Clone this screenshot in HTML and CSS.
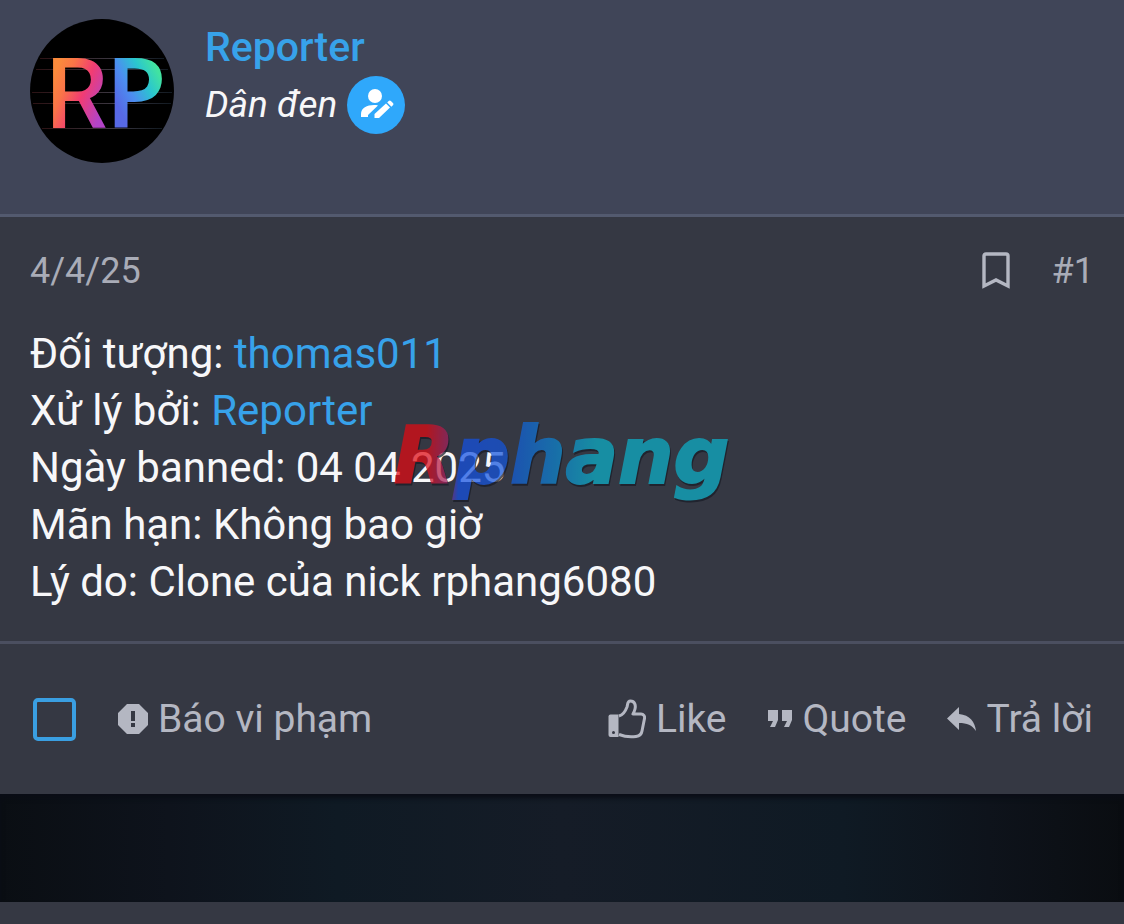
FILE: index.html
```
<!DOCTYPE html>
<html lang="vi">

<head>
    <meta charset="utf-8">
    <meta name="viewport" content="width=device-width, initial-scale=1.0">
    <title>Reporter</title>

    <link rel="stylesheet" href="styles.css">
</head>

<body>

    <main>
        <article class="post">
            <header class="user">
                <svg class="avatar" viewBox="0 0 144 144" role="img" aria-label="RP">
                    <defs>
                        <linearGradient id="r-fill" gradientUnits="userSpaceOnUse" x1="22" y1="60" x2="76" y2="82">
                            <stop offset="0" stop-color="#fb8b3c" />
                            <stop offset=".25" stop-color="#fa7448" />
                            <stop offset=".58" stop-color="#f23c72" />
                            <stop offset="1" stop-color="#b344c8" />
                        </linearGradient>
                        <linearGradient id="p-fill" gradientUnits="userSpaceOnUse" x1="84" y1="80" x2="130" y2="56">
                            <stop offset="0" stop-color="#5769e6" />
                            <stop offset=".35" stop-color="#4c8ef0" />
                            <stop offset=".7" stop-color="#2ac6cf" />
                            <stop offset="1" stop-color="#42e3a0" />
                        </linearGradient>
                        <linearGradient id="streak">
                            <stop offset="0" stop-color="#2c1214" />
                            <stop offset=".6" stop-color="#3c3842" />
                            <stop offset="1" stop-color="#121a22" />
                        </linearGradient>
                    </defs>
                    <circle cx="72" cy="72" r="72" fill="#000" />
                    <g fill="url(#streak)">
                        <rect x="10" y="39" width="124" height="1" />
                        <rect x="6" y="50" width="132" height="1" />
                        <rect x="2" y="73" width="140" height="1" />
                        <rect x="3" y="84" width="138" height="1" />
                        <rect x="12" y="109" width="120" height="1" />
                    </g>
                    <text class="avatar-letter" x="16" y="109" fill="url(#r-fill)">R</text>
                    <text class="avatar-letter narrow" x="76" y="109" fill="url(#p-fill)">P</text>
                </svg>
                <div class="user-info">
                    <a href="#" class="name">Reporter</a>
                    <div class="rank">
                        <em>Dân đen</em>
                        <svg class="badge" viewBox="0 0 58 58" aria-hidden="true">
                            <circle cx="29" cy="29" r="29" fill="#2fa8fb" />
                            <g fill="#fff">
                                <circle cx="28" cy="20" r="7" />
                                <path d="M14 41v-3c0-6 6-9 13-9 1.500 0 3 .1 4 .4L21 39v2z" />
                                <path d="M27.500 42v-4L39 27.500l4 4L32 42zM40.200 26.500l1.500-1.500c.7-.7 1.500-.7 2.200 0l2 2c.7.700.7 1.500 0 2.200l-1.500 1.500z" />
                            </g>
                        </svg>
                    </div>
                </div>
            </header>

            <div class="post-top">
                <a href="#"><time datetime="2025-04-04">4/4/25</time></a>
                <div class="post-links">
                    <button class="bookmark" aria-label="Bookmark">
                        <svg viewBox="0 0 28 38" aria-hidden="true">
                            <path d="M2 34V4q0-2 2-2h20q2 0 2 2v30l-12-6z" fill="none" stroke="#b4b7c2" stroke-width="3.400" />
                        </svg>
                    </button>
                    <a href="#">#1</a>
                </div>
            </div>

            <div class="post-text">
                <p>Đối tượng: <a href="#">thomas011</a></p>
                <p>Xử lý bởi: <a href="#">Reporter</a></p>
                <p>Ngày banned: 04 04 2025</p>
                <p>Mãn hạn: Không bao giờ</p>
                <p>Lý do: Clone của nick rphang6080</p>

                <svg class="watermark" viewBox="0 0 360 120" role="img" aria-label="Rphang">
                    <defs>
                        <linearGradient id="mark-fill" gradientUnits="userSpaceOnUse" x1="0" y1="70" x2="340" y2="85">
                            <stop offset=".1" stop-color="#e20a12" />
                            <stop offset=".17" stop-color="#9a2468" />
                            <stop offset=".2" stop-color="#1450e4" />
                            <stop offset=".33" stop-color="#1456dc" />
                            <stop offset=".48" stop-color="#0e84d0" />
                            <stop offset=".6" stop-color="#0cb0c8" />
                            <stop offset="1" stop-color="#0cb0c8" />
                        </linearGradient>
                    </defs>
                    <text class="mark-letters" x="3" y="82" fill="url(#mark-fill)" stroke="url(#mark-fill)">Rphang</text>
                </svg>
            </div>

            <footer class="actions">
                <input type="checkbox" class="select" aria-label="Chọn bài viết">
                <button class="action">
                    <svg class="icon-report" viewBox="0 0 30 30" aria-hidden="true">
                        <path d="M9 0h12l9 9v12l-9 9H9l-9-9V9zM13 7v10h4V7zm0 12v4h4v-4z" fill="#b4b7c2" fill-rule="evenodd" />
                    </svg>
                    Báo vi phạm
                </button>
                <div class="actions-right">
                    <button class="action">
                        <svg class="icon-like" viewBox="0 0 38 40" aria-hidden="true">
                            <path d="M2.500 15.500h8V38h-8q-2 0-2-2V17.500q0-2 2-2z" fill="#b4b7c2" />
                            <circle cx="5.500" cy="33.500" r="1.500" fill="#353843" />
                            <path d="M11 17c4-1 6.500-5 8-9 1-3 0-6 3.500-6 4 0 5.500 4 4.500 8-.5 2-1.500 4-2 5h8c2.500 0 4 2 3.500 4.500L34 32c-.5 3.500-2.500 5-6 5.500-6 .8-12 0-17-2" fill="none" stroke="#b4b7c2" stroke-width="3" stroke-linejoin="round" />
                        </svg>
                        Like
                    </button>
                    <button class="action">
                        <svg class="icon-quote" viewBox="0 0 26 18" aria-hidden="true">
                            <path d="M1 0h10v10l-3 7H3l3-6H1zM15 0h10v10l-3 7h-5l3-6h-5z" fill="#b4b7c2" />
                        </svg>
                        Quote
                    </button>
                    <button class="action">
                        <svg class="icon-reply" viewBox="0 0 30 24" aria-hidden="true">
                            <path d="M12 7V0L0 11.500 12 23v-7c8 0 13 2 17 8C28 15 23 8 12 7z" fill="#b4b7c2" />
                        </svg>
                        Trả lời
                    </button>
                </div>
            </footer>
        </article>

        <div class="gap"></div>
        <section class="next-post"></section>
    </main>

</body></html>
```
FILE: styles.css
```
* {
    box-sizing: border-box;
}

body {
    margin: 0;
    background: #353843;
    color: #f7f7f9;
    font-family: Roboto, "Noto Sans", sans-serif;
    font-size: 42px;
}

a {
    color: #37a2ea;
    text-decoration: none;
}

button {
    display: flex;
    align-items: center;
    padding: 0;
    border: none;
    background: none;
    color: #b4b7c2;
    font: inherit;
    cursor: pointer;
}

svg {
    display: block;
    flex: none;
}

/* user */

.user {
    display: flex;
    gap: 31px;
    min-height: 217px;
    padding: 19px 30px;
    background: #404558;
    border-bottom: 3px solid #535a6f;
}

.avatar {
    width: 144px;
    height: 144px;
}

.avatar-letter {
    font-size: 98px;
    font-weight: 500;
}

.avatar-letter.narrow {
    font-family: "Noto Sans", sans-serif;
    font-weight: 600;
}

.name {
    display: block;
    font-size: 41px;
    font-weight: 500;
    line-height: 56px;
}

.rank {
    display: flex;
    align-items: center;
    gap: 10px;
    font-size: 37px;
    line-height: 60px;
}

.badge {
    width: 58px;
    height: 58px;
}

/* post */

.post-top {
    display: flex;
    justify-content: space-between;
    align-items: center;
    padding: 32px 30px 0;
    font-size: 36px;
    line-height: 44px;
}

.post-top a {
    color: #a9acb7;
}

.post-links {
    display: flex;
    align-items: center;
    gap: 42px;
}

.bookmark svg {
    width: 28px;
    height: 38px;
}

.post-text {
    position: relative;
    padding: 32px 30px 31px;
    line-height: 57px;
}

.post-text p {
    margin: 0;
}

.watermark {
    position: absolute;
    top: 108px;
    left: 391px;
    width: 360px;
    height: 120px;
    opacity: .72;
    pointer-events: none;
}

.mark-letters {
    font-family: "DejaVu Sans", sans-serif;
    font-size: 78px;
    font-weight: bold;
    font-style: italic;
    stroke-width: 2px;
    filter: drop-shadow(1px 2px 0 #191c26);
}

/* actions */

.actions {
    display: flex;
    align-items: center;
    padding: 51px 31px;
    border-top: 3px solid #4b4f60;
    font-size: 39px;
    line-height: 48px;
}

.select {
    appearance: none;
    width: 43px;
    height: 43px;
    margin: 0 42px 0 2px;
    border: 4px solid #3a9fe2;
    border-radius: 5px;
}

.action {
    gap: 10px;
}

.actions-right {
    display: flex;
    gap: 40px;
    margin-left: auto;
}

.icon-report {
    width: 30px;
    height: 30px;
}

.icon-like {
    width: 38px;
    height: 40px;
}

.icon-quote {
    width: 26px;
    height: 18px;
}

.icon-reply {
    width: 30px;
    height: 24px;
}

.gap {
    height: 108px;
    background: linear-gradient(90deg, #0a0e13, #0e131c 15%, #0f1a24 30%, #151c27 50%, #0f1a24 75%, #0e131b 88%, #0a0d11);
    box-shadow: inset 0 4px 5px #0a0d16;
}
```
